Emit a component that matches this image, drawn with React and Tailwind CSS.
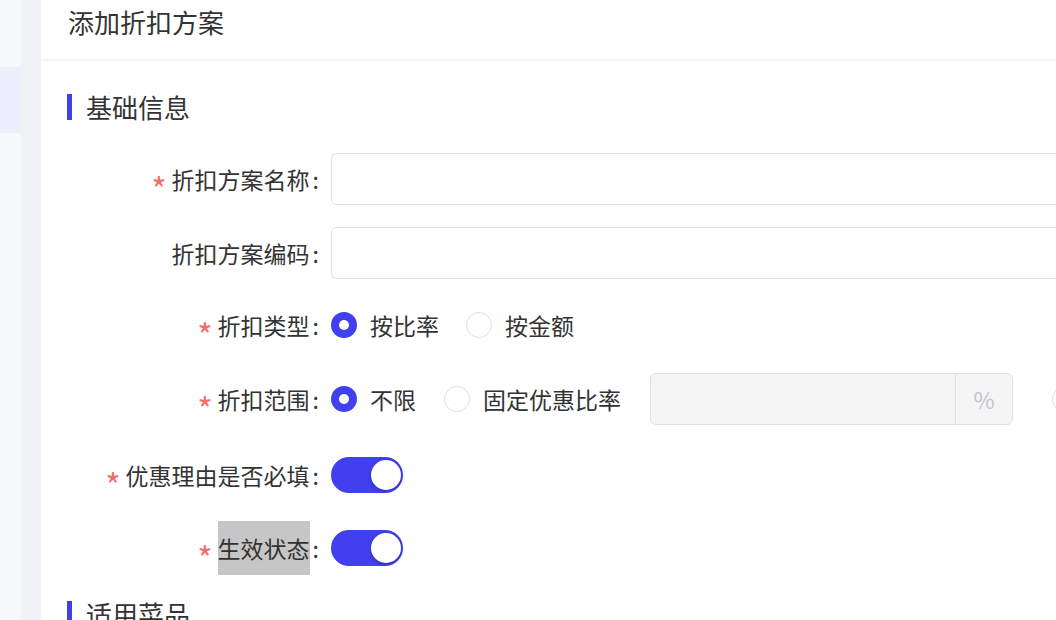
import React from "react";

const FONT = { fontFamily: '"Noto Sans CJK SC", "Noto Sans", sans-serif' };

function Star() {
  return <span className="text-[#f56c6c] text-[33px] leading-none mr-[5px] inline-block translate-y-[9px]">*</span>;
}

function Label({ required, children, highlight }) {
  return (
    <div className="w-[290px] shrink-0 flex items-center justify-end pr-[12px] text-[23px] text-[#333]">
      {required && <Star />}
      {highlight ? (
        <span className="bg-[#c6c6c6] h-[54px] inline-flex items-center">{children}</span>
      ) : (
        <span>{children}</span>
      )}
      <span className="ml-[3px]">:</span>
    </div>
  );
}

function Radio({ checked }) {
  return checked ? (
    <span className="w-[26px] h-[26px] rounded-full bg-[#4040ef] flex items-center justify-center shrink-0">
      <span className="w-[10px] h-[10px] rounded-full bg-white" />
    </span>
  ) : (
    <span className="w-[26px] h-[26px] rounded-full border border-[#dcdfe6] bg-white shrink-0 block" />
  );
}

function RadioItem({ checked, children, className = "" }) {
  return (
    <div className={"flex items-center gap-[13px] text-[23px] text-[#333] " + className}>
      <Radio checked={checked} />
      <span>{children}</span>
    </div>
  );
}

function Switch() {
  return (
    <div className="w-[72px] h-[36px] rounded-full bg-[#4040ef] flex items-center justify-end pr-[2px]">
      <span className="w-[30px] h-[30px] rounded-full bg-white shadow-[0_1px_4px_rgba(0,0,0,0.25)]" />
    </div>
  );
}

function SectionTitle({ children }) {
  return (
    <div className="flex items-center h-[26px] pl-[26px] gap-[14px]">
      <span className="w-[5px] h-[26px] bg-[#4040ef]" />
      <span className="text-[26px] leading-none text-[#333]">{children}</span>
    </div>
  );
}

export default function App() {
  return (
    <div className="flex w-[1056px] h-[620px] overflow-hidden bg-white" style={FONT}>
      <aside className="w-[21px] shrink-0 bg-[#f8f9fd] flex flex-col">
        <div className="h-[67px]" />
        <div className="h-[66px] bg-[#edf0fc]" />
      </aside>
      <div className="w-[20px] shrink-0 bg-[#f0f2f6]" />
      <main className="flex-1 min-w-0 flex flex-col overflow-hidden">
        <header className="h-[61px] shrink-0 border-b-2 border-[#f3f3f3] pl-[27px] pt-[8px]">
          <h1 className="text-[26px] leading-[28px] text-[#333] whitespace-nowrap">添加折扣方案</h1>
        </header>

        <div className="pt-[33px]">
          <SectionTitle>基础信息</SectionTitle>
        </div>

        <div className="pt-[33px] flex flex-col">
          <div className="flex items-center h-[52px] mb-[22px]">
            <Label required>折扣方案名称</Label>
            <div className="w-[760px] shrink-0 h-[52px] rounded-[6px] border border-[#dcdfe6] bg-white" />
          </div>
          <div className="flex items-center h-[52px] mb-[22px]">
            <Label>折扣方案编码</Label>
            <div className="w-[760px] shrink-0 h-[52px] rounded-[6px] border border-[#dcdfe6] bg-white" />
          </div>
          <div className="flex items-center h-[48px] mb-[24px]">
            <Label required>折扣类型</Label>
            <RadioItem checked className="mr-[27px]">按比率</RadioItem>
            <RadioItem>按金额</RadioItem>
          </div>
          <div className="flex items-center h-[52px] mb-[24px]">
            <Label required>折扣范围</Label>
            <RadioItem checked className="mr-[28px] shrink-0">不限</RadioItem>
            <RadioItem className="mr-[29px] shrink-0">固定优惠比率</RadioItem>
            <div className="w-[363px] shrink-0 h-[52px] rounded-[6px] border border-[#dcdfe6] bg-[#f5f5f5] flex">
              <div className="flex-1" />
              <div className="w-[57px] border-l border-[#dcdfe6] flex items-center justify-center text-[23px] text-[#c0c4cc]">%</div>
            </div>
            <div className="ml-[39px] shrink-0">
              <Radio />
            </div>
          </div>
          <div className="flex items-center h-[52px] mb-[20px]">
            <Label required>优惠理由是否必填</Label>
            <Switch />
          </div>
          <div className="flex items-center h-[54px] mb-[26px]">
            <Label required highlight>生效状态</Label>
            <Switch />
          </div>
        </div>

        <SectionTitle>适用菜品</SectionTitle>
      </main>
    </div>
  );
}
